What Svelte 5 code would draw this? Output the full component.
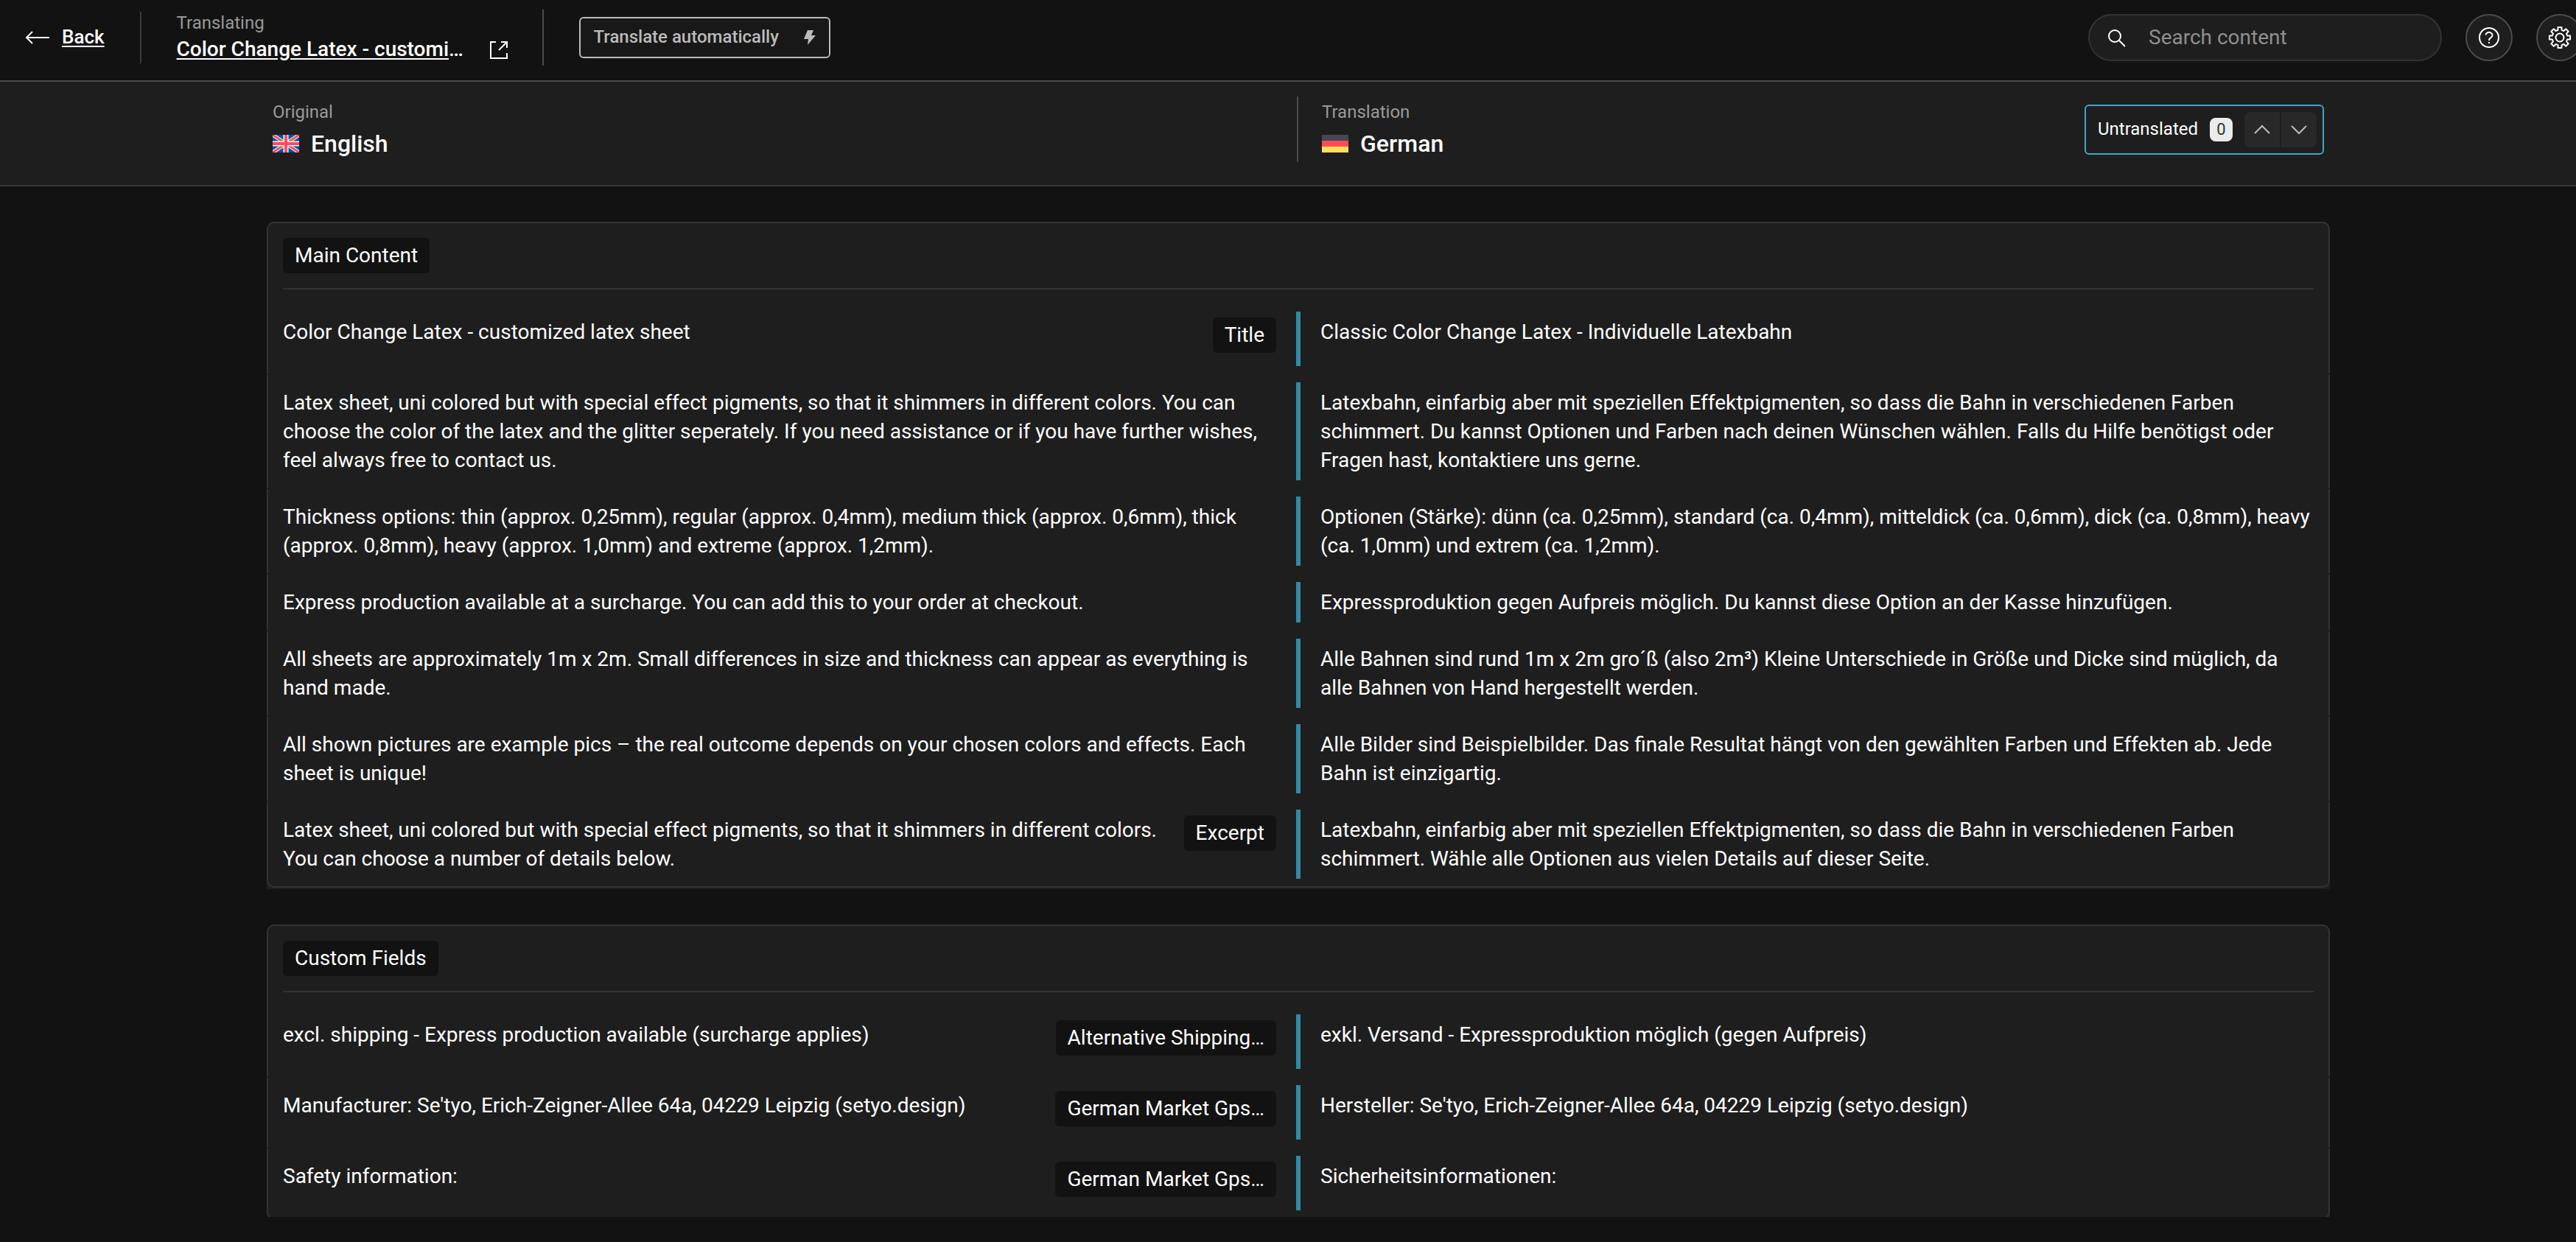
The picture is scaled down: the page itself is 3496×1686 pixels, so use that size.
<script>
  let search = '';

  // settings cog: eight teeth round a 32px box
  const at = (radius, deg) => {
    const a = (deg * Math.PI) / 180;
    return `${(16 + radius * Math.cos(a)).toFixed(2)} ${(16 + radius * Math.sin(a)).toFixed(2)}`;
  };
  const cog = 'M' + [0, 45, 90, 135, 180, 225, 270, 315]
    .flatMap((t) => [at(10.5, t - 14), at(14.3, t - 10), at(14.3, t + 10), at(10.5, t + 14)])
    .join('L') + 'Z';

  const sections = [
    {
      name: 'Main Content',
      rows: [
        {
          original: 'Color Change Latex - customized latex sheet',
          translation: 'Classic Color Change Latex - Individuelle Latexbahn',
          field: 'Title'
        },
        {
          original: 'Latex sheet, uni colored but with special effect pigments, so that it shimmers in different colors. You can choose the color of the latex and the glitter seperately. If you need assistance or if you have further wishes, feel always free to contact us.',
          translation: 'Latexbahn, einfarbig aber mit speziellen Effektpigmenten, so dass die Bahn in verschiedenen Farben schimmert. Du kannst Optionen und Farben nach deinen Wünschen wählen. Falls du Hilfe benötigst oder Fragen hast, kontaktiere uns gerne.'
        },
        {
          original: 'Thickness options: thin (approx. 0,25mm), regular (approx. 0,4mm), medium thick (approx. 0,6mm), thick (approx. 0,8mm), heavy (approx. 1,0mm) and extreme (approx. 1,2mm).',
          translation: 'Optionen (Stärke): dünn (ca. 0,25mm), standard (ca. 0,4mm), mitteldick (ca. 0,6mm), dick (ca. 0,8mm), heavy (ca. 1,0mm) und extrem (ca. 1,2mm).'
        },
        {
          original: 'Express production available at a surcharge. You can add this to your order at checkout.',
          translation: 'Expressproduktion gegen Aufpreis möglich. Du kannst diese Option an der Kasse hinzufügen.'
        },
        {
          original: 'All sheets are approximately 1m x 2m. Small differences in size and thickness can appear as everything is hand made.',
          translation: 'Alle Bahnen sind rund 1m x 2m gro´ß (also 2m³) Kleine Unterschiede in Größe und Dicke sind müglich, da alle Bahnen von Hand hergestellt werden.'
        },
        {
          original: 'All shown pictures are example pics – the real outcome depends on your chosen colors and effects. Each sheet is unique!',
          translation: 'Alle Bilder sind Beispielbilder. Das finale Resultat hängt von den gewählten Farben und Effekten ab. Jede Bahn ist einzigartig.'
        },
        {
          original: 'Latex sheet, uni colored but with special effect pigments, so that it shimmers in different colors. You can choose a number of details below.',
          translation: 'Latexbahn, einfarbig aber mit speziellen Effektpigmenten, so dass die Bahn in verschiedenen Farben schimmert. Wähle alle Optionen aus vielen Details auf dieser Seite.',
          field: 'Excerpt'
        }
      ]
    },
    {
      name: 'Custom Fields',
      rows: [
        {
          original: 'excl. shipping - Express production available (surcharge applies)',
          translation: 'exkl. Versand - Expressproduktion möglich (gegen Aufpreis)',
          field: 'Alternative Shipping…'
        },
        {
          original: "Manufacturer: Se'tyo, Erich-Zeigner-Allee 64a, 04229 Leipzig (setyo.design)",
          translation: "Hersteller: Se'tyo, Erich-Zeigner-Allee 64a, 04229 Leipzig (setyo.design)",
          field: 'German Market Gps…'
        },
        {
          original: 'Safety information:',
          translation: 'Sicherheitsinformationen:',
          field: 'German Market Gps…'
        }
      ]
    }
  ];
</script>

<div class="page">
  <header class="topbar">
    <a class="back" href="#back">
      <svg width="34" height="18" viewBox="0 0 34 18"><path d="M10 1L2 9l8 8M2 9h31" /></svg>
      <span>Back</span>
    </a>
    <div class="document">
      <div class="document-text">
        <div class="caption">Translating</div>
        <div class="document-title"><a href="#document">Color Change Latex - customi</a>…</div>
      </div>
      <a class="open" href="#open" aria-label="Open original">
        <svg width="26" height="26" viewBox="0 0 26 26"><path d="M9 2H2v22h22v-7M16 2h8v8M24 2L13 13" /></svg>
      </a>
    </div>
    <button class="auto">
      Translate automatically
      <svg width="16" height="22" viewBox="0 0 16 22"><path d="M5 1h8l-3 7h6L5 21l1-8H0z" /></svg>
    </button>
    <label class="search">
      <svg width="26" height="30" viewBox="0 0 26 30"><circle cx="10" cy="13" r="8" /><path d="M16 19l8 8" /></svg>
      <input type="text" placeholder="Search content" aria-label="Search content" bind:value={search} />
    </label>
    <button class="round" aria-label="Help">
      <svg width="30" height="30" viewBox="0 0 30 30"><circle cx="15" cy="15" r="13" /><path d="M10.500 11.500a4.500 4 0 1 1 7 3.600q-2.500 1.200-2.500 3.900M15 21v2" /></svg>
    </button>
    <button class="round" aria-label="Settings">
      <svg class="cog" width="32" height="32" viewBox="0 0 32 32"><path d={cog} /><circle cx="16" cy="16" r="5.500" /></svg>
    </button>
  </header>

  <div class="languages">
    <div class="languages-inner">
      <div class="language source">
        <div class="caption">Original</div>
        <div class="language-name">
          <svg width="36" height="24" viewBox="0 0 36 24">
            <path fill="#0052b4" stroke="none" d="M0 0h36v24H0z" />
            <path stroke="#f5f5f5" stroke-width="5" d="M0 0l36 24M36 0L0 24" />
            <path stroke="#ff4b55" stroke-width="3" d="M0 0l36 24M36 0L0 24" />
            <path stroke="#f5f5f5" stroke-width="7" d="M18 0v24M0 12h36" />
            <path stroke="#ff4b55" stroke-width="4" d="M18 0v24M0 12h36" />
          </svg>
          English
        </div>
      </div>
      <div class="target">
        <div class="language">
          <div class="caption">Translation</div>
          <div class="language-name">
            <svg width="36" height="24" viewBox="0 0 36 24">
              <path fill="#464655" stroke="none" d="M0 0h36v8H0z" />
              <path fill="#ff4b55" stroke="none" d="M0 8h36v8H0z" />
              <path fill="#ffe15a" stroke="none" d="M0 16h36v8H0z" />
            </svg>
            German
          </div>
        </div>
        <div class="untranslated">
          <span>Untranslated</span>
          <span class="count">0</span>
          <div class="steps">
            <button aria-label="Previous"><svg width="22" height="14" viewBox="0 0 22 14"><path d="M1 12L11 2l10 10" /></svg></button>
            <button aria-label="Next"><svg width="22" height="14" viewBox="0 0 22 14"><path d="M1 2l10 10L21 2" /></svg></button>
          </div>
        </div>
      </div>
    </div>
  </div>

  <main>
    {#each sections as section}
      <section>
        <div class="section-head"><h2 class="chip">{section.name}</h2></div>
        {#each section.rows as row}
          <div class="row">
            <div class="original">
              <p>{row.original}</p>
              {#if row.field}<span class="chip field">{row.field}</span>{/if}
            </div>
            <div class="bar"></div>
            <p class="translation" lang="de">{row.translation}</p>
          </div>
        {/each}
      </section>
    {/each}
  </main>
</div>

<style>
  :global(body) {
    background: #121212;
    overflow: hidden;
  }

  /* the editor runs a little past the right edge of the window */
  .page {
    display: flex;
    flex-direction: column;
    height: 100vh;
    margin-right: -28px;
    background: #121212;
    color: #fff;
    font-family: Roboto, sans-serif;
    font-size: 28px;
    line-height: 39px;
  }

  button {
    font: inherit;
    padding: 0;
    cursor: pointer;
  }

  svg {
    display: block;
    flex: none;
    fill: none;
    stroke: currentColor;
    stroke-width: 2;
  }

  .topbar {
    display: flex;
    align-items: center;
    box-sizing: border-box;
    height: 111px;
    padding: 0 18px 8px 34px;
    border-bottom: 2px solid #4b4b4b;
  }

  .back {
    display: flex;
    align-items: center;
    gap: 16px;
    height: 72px;
    padding-right: 48px;
    border-right: 2px solid #3c3c3c;
    border-radius: 4px;
    color: #fff;
    font-size: 26px;
    font-weight: 500;
    text-decoration: none;
  }

  .back span {
    text-decoration: underline;
    text-underline-offset: 3px;
  }

  .document {
    display: flex;
    align-items: flex-end;
    justify-content: space-between;
    box-sizing: border-box;
    width: 546px;
    height: 76px;
    padding: 0 46px 0 48px;
    border-right: 2px solid #4b4b4b;
  }

  .document-text {
    align-self: center;
    padding-bottom: 4px;
  }

  .caption {
    color: #999;
    font-size: 24px;
    line-height: 36px;
  }

  .document-title {
    font-weight: 500;
    line-height: 36px;
    white-space: nowrap;
  }

  .document-title a {
    color: #fff;
    text-underline-offset: 3px;
  }

  .open {
    padding-bottom: 8px;
    color: #fff;
  }

  .auto {
    display: flex;
    align-items: center;
    gap: 34px;
    height: 56px;
    margin-left: 48px;
    padding: 0 18px;
    border: 2px solid #bbb;
    border-radius: 6px;
    background: #181818;
    color: #bbb;
    font-size: 24px;
    font-weight: 500;
  }

  .auto svg {
    fill: currentColor;
    stroke: none;
  }

  .search {
    display: flex;
    align-items: center;
    gap: 30px;
    box-sizing: border-box;
    width: 480px;
    height: 64px;
    margin-left: auto;
    padding: 0 24px;
    border: 2px solid #333;
    border-radius: 32px;
    background: #1e1e1e;
  }

  .search input {
    flex: 1;
    min-width: 0;
    padding: 0;
    border: 0;
    outline: 0;
    background: none;
    color: #fff;
    font: inherit;
  }

  .search input::placeholder {
    color: #8f8f8f;
    opacity: 1;
  }

  .round {
    display: flex;
    align-items: center;
    justify-content: center;
    flex: none;
    width: 64px;
    height: 64px;
    margin-left: 32px;
    border: 2px solid #4b4b4b;
    border-radius: 50%;
    background: #1e1e1e;
    color: #fff;
  }

  .cog {
    stroke-linejoin: round;
  }

  .languages {
    box-sizing: border-box;
    height: 142px;
    padding-top: 20px;
    border-bottom: 2px solid #383838;
    background: #1e1e1e;
  }

  .languages-inner {
    display: grid;
    grid-template-columns: 1fr 1fr;
    max-width: 2800px;
    margin: 0 auto;
  }

  .language {
    padding-top: 3px;
  }

  .source {
    padding-left: 8px;
    border-right: 2px solid #4b4b4b;
  }

  .target {
    display: flex;
    align-items: center;
    justify-content: space-between;
    padding: 0 8px 0 32px;
  }

  .language-name {
    display: flex;
    align-items: center;
    gap: 16px;
    height: 50px;
    font-size: 32px;
    font-weight: 500;
  }

  .untranslated {
    display: flex;
    align-items: center;
    gap: 16px;
    box-sizing: border-box;
    height: 68px;
    padding: 0 8px 0 16px;
    border: 2px solid #41a5c3;
    border-radius: 6px;
    font-size: 24px;
  }

  .count {
    width: 31px;
    border-radius: 8px;
    background: #ebebeb;
    color: #333;
    font-size: 22px;
    line-height: 32px;
    text-align: center;
  }

  .steps {
    display: flex;
    gap: 2px;
    overflow: hidden;
    border-radius: 8px;
  }

  .steps button {
    display: flex;
    align-items: center;
    justify-content: center;
    width: 48px;
    height: 48px;
    border: 0;
    background: #282828;
    color: #bbb;
  }

  main {
    flex: 1;
    min-height: 0;
    margin-bottom: 34px;
    overflow: hidden;
  }

  section {
    max-width: 2800px;
    margin: 48px auto 0;
    padding-bottom: 2px;
    border-radius: 10px 10px 0 0;
    background: #1e1e1e;
  }

  .section-head {
    padding: 20px 20px 0;
    border: 2px solid #333;
    border-bottom: 0;
    border-radius: 10px 10px 0 0;
  }

  .section-head::after {
    content: '';
    display: block;
    height: 2px;
    margin-top: 20px;
    background: #333;
  }

  .chip {
    display: block;
    box-sizing: border-box;
    width: fit-content;
    margin: 0;
    padding: 0 16px;
    border-radius: 6px;
    background: #121212;
    font-size: 28px;
    font-weight: 400;
    line-height: 48px;
  }

  .row {
    display: grid;
    grid-template-columns: 1fr 6px 1fr;
    padding: 10px 20px;
    border: solid #333;
    border-width: 0 2px;
  }

  .row + .row {
    margin-top: 2px;
  }

  .section-head + .row {
    padding-top: 30px;
  }

  .row:last-child {
    border-bottom-width: 2px;
    border-radius: 0 0 10px 10px;
  }

  .original {
    display: flex;
    justify-content: space-between;
    align-items: flex-start;
    gap: 32px;
    padding: 8px 27px 8px 0;
  }

  .row p {
    margin: 0;
  }

  .field {
    flex: none;
    max-width: 300px;
    margin-bottom: 10px;
    overflow: hidden;
    text-overflow: ellipsis;
    white-space: nowrap;
  }

  .bar {
    background: #3489a1;
  }

  .row .translation {
    padding: 8px 0 8px 27px;
  }
</style>
